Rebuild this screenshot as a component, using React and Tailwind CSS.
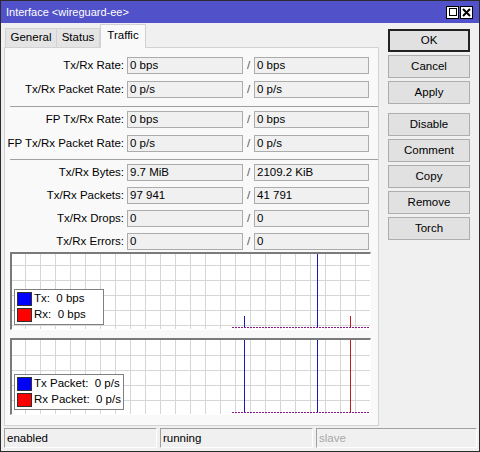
import React from 'react';

const rows1 = [
  ['Tx/Rx Rate:', '0 bps', '0 bps'],
  ['Tx/Rx Packet Rate:', '0 p/s', '0 p/s'],
];
const rows2 = [
  ['FP Tx/Rx Rate:', '0 bps', '0 bps'],
  ['FP Tx/Rx Packet Rate:', '0 p/s', '0 p/s'],
];
const rows3 = [
  ['Tx/Rx Bytes:', '9.7 MiB', '2109.2 KiB'],
  ['Tx/Rx Packets:', '97 941', '41 791'],
  ['Tx/Rx Drops:', '0', '0'],
  ['Tx/Rx Errors:', '0', '0'],
];

const Field = ({ value }) => (
  <div className="h-[17px] border border-[#acacac] bg-[#f0f0f0] pl-[2px] leading-[15px] overflow-hidden whitespace-nowrap">
    {value}
  </div>
);

const Row = ({ label, tx, rx }) => (
  <div className="flex items-center h-[17px]">
    <div className="w-[122px] pr-[3px] text-right whitespace-nowrap">{label}</div>
    <div className="w-[116px]"><Field value={tx} /></div>
    <div className="w-[11px] text-center text-[#555]">/</div>
    <div className="w-[115px]"><Field value={rx} /></div>
  </div>
);

const Separator = () => <div className="ml-[5px] h-px bg-[#a0a0a0]" />;

// grid + spikes for one graph, w/h are the inner size
const GraphCanvas = ({ w, h, offY, spikes }) => {
  const vx = [];
  for (let x = 13; x < w; x += 15) vx.push(x);
  const hy = [];
  for (let y = offY; y < h; y += 15) hy.push(y);
  const base = h - 1.5;
  return (
    <svg width={w} height={h} className="absolute left-0 top-0">
      {vx.map(x => <line key={'v' + x} x1={x + 0.5} y1={0} x2={x + 0.5} y2={h} stroke="#d6d6d6" />)}
      {hy.map(y => <line key={'h' + y} x1={0} y1={y + 0.5} x2={w} y2={y + 0.5} stroke="#d6d6d6" />)}
      {spikes.map((s, i) => (
        <line key={i} x1={s.x + 0.5} y1={s.top} x2={s.x + 0.5} y2={base} stroke={s.color} />
      ))}
      <line x1={220} y1={base} x2={357} y2={base} stroke="#8a1a8a" strokeDasharray="2 1" />
    </svg>
  );
};

const Legend = ({ items, className }) => (
  <div className={'absolute bg-white border border-[#808080] px-[2px] py-[2px] flex flex-col gap-[2px] ' + className}>
    {items.map(([color, text]) => (
      <div key={text} className="flex items-center h-[14px] whitespace-pre">
        <div className={'w-[15px] h-[14px] border border-[#303030] mr-[2px] ' + color} />
        <span>{text}</span>
      </div>
    ))}
  </div>
);

const Graph = ({ h, offY, spikes, legend, legendClass }) => (
  <div className="w-[361px] border-t-2 border-l-2 border-[#7a7a7a] border-r border-b border-r-white border-b-white bg-white relative" style={{ height: h }}>
    <GraphCanvas w={358} h={h - 3} offY={offY} spikes={spikes} />
    <Legend items={legend} className={legendClass} />
  </div>
);

const Btn = ({ children, primary }) => (
  <div
    className={
      'h-[23px] flex items-center justify-center bg-[#e1e1e1] ' +
      (primary ? 'border-2 border-[#222]' : 'border border-[#adadad]')
    }
  >
    {children}
  </div>
);

const StatusField = ({ children, className }) => (
  <div className={'h-[20px] border-t border-l border-[#a0a0a0] border-r border-b border-r-white border-b-white pl-[2px] leading-[18px] ' + className}>
    {children}
  </div>
);

export default function App() {
  return (
    <div className="w-[480px] h-[452px] border border-[#2b2b2b] bg-[#f0f0f0] flex flex-col text-[11.5px] text-black font-['Liberation_Sans',sans-serif] overflow-hidden">
      {/* title bar */}
      <div className="h-[22px] bg-[#5151c9] flex items-center justify-between pl-[5px] pr-[6px] text-white">
        <span className="text-[11px]">Interface &lt;wireguard-ee&gt;</span>
        <div className="flex gap-[1px]">
          <div className="w-[13px] h-[13px] bg-white border border-black flex items-center justify-center">
            <div className="w-[8px] h-[8px] border border-black" />
          </div>
          <div className="w-[13px] h-[13px] bg-white border border-black flex items-center justify-center">
            <svg width="9" height="9" viewBox="0 0 9 9">
              <path d="M1 1 L8 8 M8 1 L1 8" stroke="black" strokeWidth="2" />
            </svg>
          </div>
        </div>
      </div>

      <div className="flex h-[403px]">
        {/* left side: tabs and page */}
        <div className="pl-[3px] w-[378px] flex flex-col">
          <div className="h-[24px] flex items-end pl-[1px] relative z-10">
            <div className="h-[19px] w-[52px] bg-[#e4e4e4] border border-[#d2d2d2] border-b-0 flex items-center justify-center">General</div>
            <div className="h-[19px] w-[43px] bg-[#e4e4e4] border border-[#d2d2d2] border-b-0 border-l-0 flex items-center justify-center">Status</div>
            <div className="h-[24px] w-[46px] bg-[#f9f9f9] border border-[#d2d2d2] border-b-0 -mb-px flex items-start pt-[2px] justify-center">Traffic</div>
          </div>
          <div className="h-[379px] border border-[#d2d2d2] bg-[#f9f9f9] pt-[9px] flex flex-col">
            <div className="flex flex-col gap-[7px]">
              {rows1.map(r => <Row key={r[0]} label={r[0]} tx={r[1]} rx={r[2]} />)}
            </div>
            <div className="mt-[8px] mb-[4px]"><Separator /></div>
            <div className="flex flex-col gap-[7px]">
              {rows2.map(r => <Row key={r[0]} label={r[0]} tx={r[1]} rx={r[2]} />)}
            </div>
            <div className="mt-[7px] mb-[4px]"><Separator /></div>
            <div className="flex flex-col gap-[6px]">
              {rows3.map(r => <Row key={r[0]} label={r[0]} tx={r[1]} rx={r[2]} />)}
            </div>
            <div className="ml-[5px] mt-[2px] flex flex-col gap-[8px]">
              <Graph
                h={78}
                offY={11}
                spikes={[
                  { x: 232, top: 62, color: '#1a1ab8' },
                  { x: 305, top: 0, color: '#1a1ab8' },
                  { x: 338, top: 62, color: '#c41a1a' },
                ]}
                legend={[['bg-[#0000ff]', 'Tx:  0 bps'], ['bg-[#ff0000]', 'Rx:  0 bps']]}
                legendClass="left-[2px] top-[35px] w-[90px]"
              />
              <Graph
                h={77}
                offY={15}
                spikes={[
                  { x: 232, top: 0, color: '#1a1ab8' },
                  { x: 305, top: 0, color: '#1a1ab8' },
                  { x: 338, top: 0, color: '#c41a1a' },
                ]}
                legend={[['bg-[#0000ff]', 'Tx Packet:  0 p/s'], ['bg-[#ff0000]', 'Rx Packet:  0 p/s']]}
                legendClass="left-[2px] top-[34px] w-[110px]"
              />
            </div>
          </div>
        </div>

        {/* right side: buttons */}
        <div className="ml-[9px] pt-[6px] w-[82px] flex flex-col">
          <div className="flex flex-col gap-[3px]">
            <Btn primary>OK</Btn>
            <Btn>Cancel</Btn>
            <Btn>Apply</Btn>
          </div>
          <div className="mt-[9px] flex flex-col gap-[3px]">
            <Btn>Disable</Btn>
            <Btn>Comment</Btn>
            <Btn>Copy</Btn>
            <Btn>Remove</Btn>
            <Btn>Torch</Btn>
          </div>
        </div>
      </div>

      {/* status bar */}
      <div className="flex pl-[3px] pr-[2px] pt-[2px] gap-[3px]">
        <StatusField className="w-[153px]">enabled</StatusField>
        <StatusField className="w-[153px]">running</StatusField>
        <StatusField className="flex-1 text-[#a8a8a8]">slave</StatusField>
      </div>
    </div>
  );
}
